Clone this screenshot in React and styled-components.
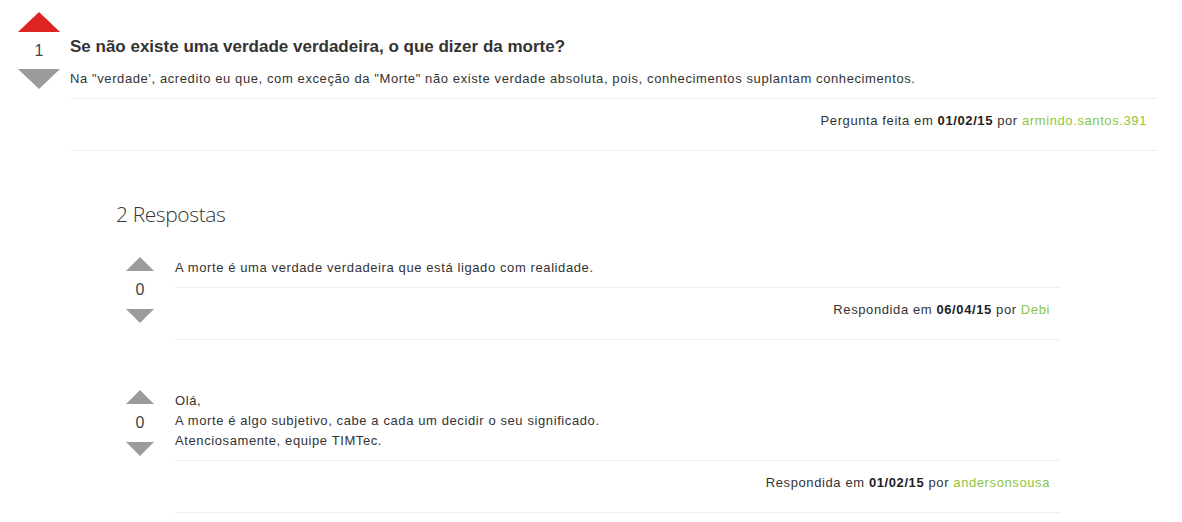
import React from 'react';
import styled, { createGlobalStyle } from 'styled-components';

const Global = createGlobalStyle`
  body {
    margin: 0;
    background: #fff;
    font-family: "Liberation Sans", Arial, sans-serif;
    color: #333;
  }
`;

const Page = styled.div`
  padding: 12px 25px 0 18px;
`;

const Row = styled.div`
  display: flex;
  align-items: flex-start;
  gap: ${p => (p.$small ? '21px' : '10px')};
`;

const Votes = styled.div`
  display: flex;
  flex-direction: column;
  align-items: center;
  width: ${p => (p.$small ? '28px' : '42px')};
  flex-shrink: 0;
  margin-top: ${p => (p.$small ? '-1px' : '0')};
`;

const Arrow = styled.div`
  width: 0;
  height: 0;
  border-left: ${p => (p.$small ? '14px' : '21px')} solid transparent;
  border-right: ${p => (p.$small ? '14px' : '21px')} solid transparent;
  ${p => (p.$down ? 'border-top' : 'border-bottom')}: ${p => (p.$small ? '14px' : '20px')} solid
    ${p => (p.$active ? '#dc2420' : '#9b9b9b')};
  cursor: pointer;
`;

const Count = styled.div`
  font-size: 16px;
  line-height: ${p => (p.$small ? '38px' : '37px')};
  color: #444;
`;

const Body = styled.div`
  flex: 1;
  padding-top: ${p => (p.$top || 0)}px;
`;

const Title = styled.h1`
  margin: 0 0 10px;
  font-size: 17px;
  line-height: 24px;
  font-weight: bold;
  color: #333;
`;

const Text = styled.div`
  font-size: 13px;
  line-height: 20px;
  letter-spacing: 0.6px;
  padding-bottom: 9px;
  border-bottom: 1px solid #eee;
`;

const Meta = styled.div`
  text-align: right;
  font-size: 13px;
  line-height: 20px;
  letter-spacing: 0.6px;
  padding: 12px 10px 19px 0;
  border-bottom: 1px solid #eee;
  b {
    color: #222;
  }
`;

const User = styled.a`
  color: #8cc63e;
  text-decoration: none;
`;

const Answers = styled.div`
  padding: 49px 97px 0 98px;
`;

const Heading = styled.h2`
  margin: 0 0 30px;
  font-family: "Open Sans", sans-serif;
  font-weight: 300;
  font-size: 21px;
  line-height: 28px;
  letter-spacing: -0.4px;
  color: #333;
`;

const Answer = styled.div`
  padding-left: 10px;
  margin-bottom: 51px;
`;

const answers = [
  {
    votes: 0,
    lines: ['A morte é uma verdade verdadeira que está ligado com realidade.'],
    date: '06/04/15',
    user: 'Debi',
  },
  {
    votes: 0,
    lines: [
      'Olá,',
      'A morte é algo subjetivo, cabe a cada um decidir o seu significado.',
      'Atenciosamente, equipe TIMTec.',
    ],
    date: '01/02/15',
    user: 'andersonsousa',
  },
];

export default function App() {
  return (
    <Page>
      <Global />
      <Row>
        <Votes>
          <Arrow $active />
          <Count>1</Count>
          <Arrow $down />
        </Votes>
        <Body $top={23}>
          <Title>Se não existe uma verdade verdadeira, o que dizer da morte?</Title>
          <Text>
            Na "verdade', acredito eu que, com exceção da "Morte" não existe verdade absoluta, pois,
            conhecimentos suplantam conhecimentos.
          </Text>
          <Meta>
            Pergunta feita em <b>01/02/15</b> por <User href="#">armindo.santos.391</User>
          </Meta>
        </Body>
      </Row>

      <Answers>
        <Heading>2 Respostas</Heading>
        {answers.map((a, i) => (
          <Answer key={i}>
            <Row $small>
              <Votes $small>
                <Arrow $small />
                <Count $small>{a.votes}</Count>
                <Arrow $small $down />
              </Votes>
              <Body>
                <Text>
                  {a.lines.map((l, j) => (
                    <div key={j}>{l}</div>
                  ))}
                </Text>
                <Meta>
                  Respondida em <b>{a.date}</b> por <User href="#">{a.user}</User>
                </Meta>
              </Body>
            </Row>
          </Answer>
        ))}
      </Answers>
    </Page>
  );
}
